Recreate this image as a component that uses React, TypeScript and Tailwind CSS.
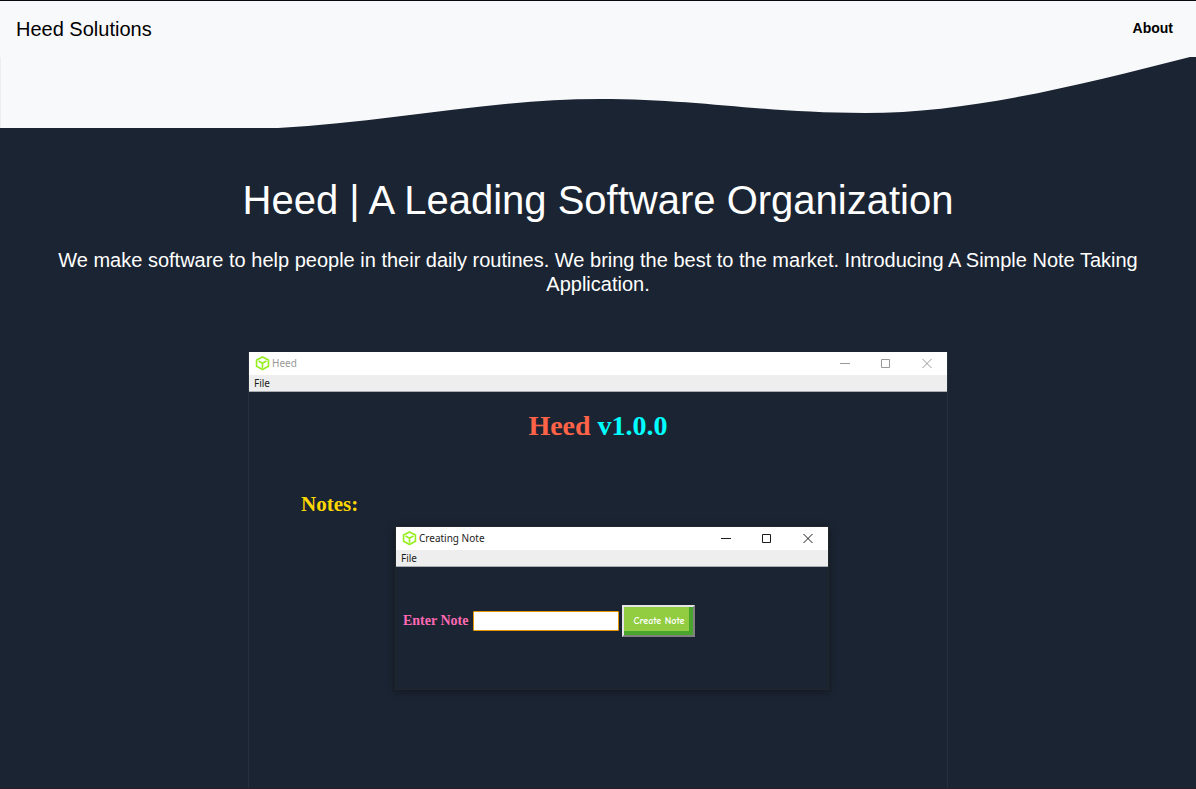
import type { ReactNode } from "react";

function CubeIcon() {
  return (
    <svg viewBox="0 0 24 24" className="size-[15px] shrink-0" fill="none" stroke="#97ee1e" strokeWidth="2.6" strokeLinejoin="round" strokeLinecap="round" aria-hidden="true">
      <path d="M12 1.500 21.500 6.500v10L12 21.500 2.500 16.500V6.500Z" />
      <path d="M6.500 8.500 12 11.500l5.500-3M12 11.500v6.500" />
    </svg>
  );
}

function WindowControls() {
  return (
    <div className="ml-auto flex items-center gap-[31px] pr-[15px] pb-[2px]">
      <button type="button" aria-label="Minimize">
        <svg viewBox="0 0 10 10" className="block size-[10px]" fill="none" stroke="currentColor" shapeRendering="crispEdges"><path d="M0 5.500h10" /></svg>
      </button>
      <button type="button" aria-label="Maximize">
        <svg viewBox="0 0 10 10" className="block size-[10px]" fill="none" stroke="currentColor"><path d="M.5 1.500h8v8h-8Z" /></svg>
      </button>
      <button type="button" aria-label="Close">
        <svg viewBox="0 0 10 10" className="block size-[10px]" fill="none" stroke="currentColor"><path d="m.5 1 9 9M9.500 1l-9 9" /></svg>
      </button>
    </div>
  );
}

function WindowBar({ title, active = false }: { title: string; active?: boolean }) {
  return (
    <div className="border-b border-[#a9adb1] bg-white font-['Noto_Sans',sans-serif] text-[10px]">
      <div className={active ? "flex h-[23px] items-center pl-[6px] text-[#1c1c1c]" : "flex h-[23px] items-center pl-[6px] text-[#999999]"}>
        <CubeIcon />
        <span className="ml-[2px]">{title}</span>
        <WindowControls />
      </div>
      <div className="flex h-4 items-center bg-[#eeeeee] px-[5px] text-[#1c1c1c]">
        <button type="button">File</button>
      </div>
    </div>
  );
}

function Accent({ className, children }: { className: string; children: ReactNode }) {
  return <span className={className}>{children}</span>;
}

function NoteDialog() {
  return (
    <section aria-label="Creating Note" className="ml-[146px] mr-[118px] h-[164px] border border-[#22262d] shadow-[0_2px_8px_rgba(0,0,0,0.35)]">
      <WindowBar title="Creating Note" active />
      <form className="mt-[38px] flex items-center pl-[7px]" onSubmit={(e) => e.preventDefault()}>
        <label htmlFor="note" className="mr-[5px] whitespace-nowrap font-['Liberation_Serif',serif] text-[14px] leading-5 font-bold text-[#ff69b4]">
          Enter Note
        </label>
        <input id="note" type="text" className="mr-[3px] h-5 w-[146px] rounded-[1px] border border-[#e59700] bg-white px-1 text-xs text-black outline-none" />
        <button type="submit" className="h-8 w-[73px] whitespace-nowrap border-2 border-t-[#e5e5e5] border-r-[#808080] border-b-[#808080] border-l-[#e5e5e5] bg-[#91cc41] font-['Comic_Neue','Comic_Sans_MS','Lato',sans-serif] text-[10px] font-bold text-white shadow-[inset_-4px_-4px_0_#4aa52e]">
          Create Note
        </button>
      </form>
    </section>
  );
}

export default function App() {
  return (
    <div className="flex min-h-screen flex-col border-t border-t-[#08090c] border-b border-b-[#2b1a2a] bg-[#1b2432] font-['Liberation_Sans',Arial,sans-serif] text-white">
      <header className="flex h-14 items-center justify-between bg-[#f8f9fb] pl-4 pr-[23px] text-black">
        <a href="#home" className="text-xl">Heed Solutions</a>
        <nav><a href="#about" className="block pb-[2px] text-[14px] font-bold">About</a></nav>
      </header>
      <svg viewBox="0 0 1196 71" preserveAspectRatio="none" className="block h-[71px] w-full" aria-hidden="true">
        <path fill="#f8f9fb" d="M0 0H1190C1080 28 970 56 865 56C760 56 700 42 600 42C490 42 390 65 278 71H0Z" />
        <path stroke="#eceef0" d="M.5 0v71" />
      </svg>
      <main className="flex flex-1 flex-col items-center px-4 pt-12 text-center">
        <h1 className="text-[40px] leading-12">Heed | A Leading Software Organization</h1>
        <p className="mt-6 w-full px-6 text-xl leading-6">
          We make software to help people in their daily routines. We bring the best to the market. Introducing A Simple Note Taking Application.
        </p>
        <section aria-label="Heed" className="mt-14 flex w-[60%] min-w-[700px] flex-1 flex-col border-x border-[#29303b] text-left">
          <WindowBar title="Heed" />
          <h2 className="mt-[18px] text-center font-['Liberation_Serif',serif] text-[28px] leading-8 font-bold">
            <Accent className="text-[#ff6347]">Heed</Accent> <Accent className="text-[#00ffff]">v1.0.0</Accent>
          </h2>
          <h3 className="mt-[50px] mb-[10px] pl-[52px] font-['Liberation_Serif',serif] text-[21px] leading-6 font-bold text-[#ffd700]">Notes:</h3>
          <NoteDialog />
        </section>
      </main>
    </div>
  );
}
